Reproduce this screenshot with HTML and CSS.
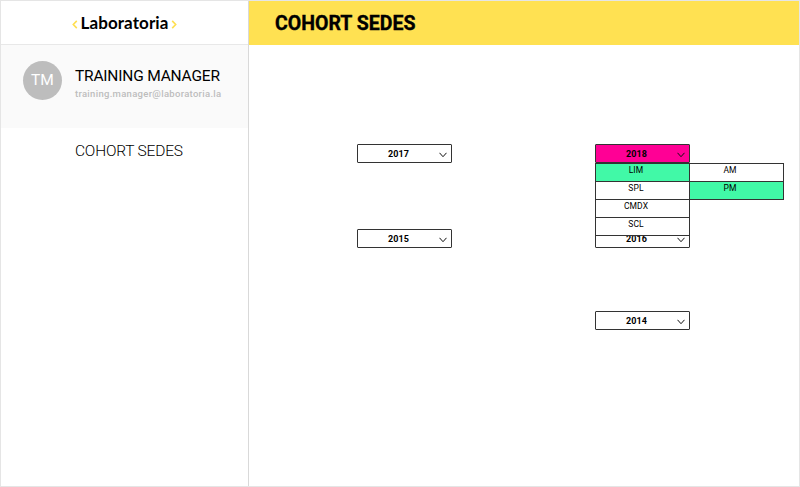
FILE: index.html
```
<!DOCTYPE html>
<html lang="es">
<head>
<meta charset="utf-8">
<title>Cohort Sedes</title>
<link rel="stylesheet" href="styles.css">
</head>
<body>
<div class="app">
  <aside class="sidebar">
    <div class="brand">
      <svg class="chevron" viewBox="0 0 6 9"><path d="M4.8 .9 1.3 4.5 4.8 8.1"/></svg>
      <span class="brand-name">Laboratoria</span>
      <svg class="chevron" viewBox="0 0 6 9"><path d="M1.2 .9 4.7 4.5 1.2 8.1"/></svg>
    </div>
    <div class="profile">
      <div class="avatar">TM</div>
      <div class="identity">
        <div class="name">TRAINING MANAGER</div>
        <div class="email">training.manager@laboratoria.la</div>
      </div>
    </div>
    <nav class="nav"><a class="nav-link">COHORT SEDES</a></nav>
  </aside>
  <main class="main">
    <header class="header"><h1 class="title">COHORT SEDES</h1></header>
    <section class="years">
      <div class="select"><span>2017</span><svg class="arrow" viewBox="0 0 8 6"><path d="M.5 .8 4 4.7 7.5 .8"/></svg></div>
      <div class="select open"><span>2018</span><svg class="arrow" viewBox="0 0 8 6"><path d="M.5 .8 4 4.7 7.5 .8"/></svg>
        <div class="menus">
          <ul class="menu">
            <li class="active">LIM</li><li>SPL</li><li>CMDX</li><li>SCL</li>
          </ul>
          <ul class="menu submenu">
            <li>AM</li><li class="active">PM</li>
          </ul>
        </div>
      </div>
      <div class="select"><span>2015</span><svg class="arrow" viewBox="0 0 8 6"><path d="M.5 .8 4 4.7 7.5 .8"/></svg></div>
      <div class="select"><span>2016</span><svg class="arrow" viewBox="0 0 8 6"><path d="M.5 .8 4 4.7 7.5 .8"/></svg></div>
      <div class="select last"><span>2014</span><svg class="arrow" viewBox="0 0 8 6"><path d="M.5 .8 4 4.7 7.5 .8"/></svg></div>
    </section>
  </main>
</div>
</body>
</html>
```
FILE: styles.css
```
* { box-sizing: border-box; }
body { margin: 0; font-family: Roboto, sans-serif; color: #000; background: #fff; }
.app { display: flex; width: 800px; height: 487px; border: 1px solid #e5e5e5; }
.sidebar { width: 248px; border-right: 1px solid #d9d9d9; }
.brand { height: 44px; display: flex; align-items: center; justify-content: center; gap: 2px; border-bottom: 1px solid #e8e8e8; }
.brand-name { width: 89px; font: 700 17px/20px Lato, sans-serif; letter-spacing: .1px; text-align: center; white-space: nowrap; }
.chevron { width: 6px; height: 9px; margin-top: 3px; fill: none; stroke: #ffdf50; stroke-width: 1.6; }
.profile { height: 83px; padding: 16px 0 0 22px; display: flex; gap: 13px; background: #fafafa; }
.avatar { width: 39px; height: 39px; border-radius: 50%; background: #bdbdbd; color: #fff; font-size: 15.5px; line-height: 39px; text-align: center; }
.name { margin-top: 6px; font-size: 15.5px; line-height: 18px; letter-spacing: -.19px; white-space: nowrap; }
.email { margin-top: 3px; font-size: 9.5px; font-weight: 500; line-height: 12px; letter-spacing: .3px; color: #bdbdbd; white-space: nowrap; }
.nav { padding: 13px 0 0 74px; }
.nav-link { font-size: 15.5px; font-weight: 300; line-height: 18px; letter-spacing: -.2px; }
.main { flex: 1; }
.header { height: 44px; padding: 2px 0 0 26px; display: flex; align-items: center; background: #ffe152; }
.title { margin: 0; font-size: 19.5px; line-height: 24px; font-weight: 700; -webkit-text-stroke: .35px #000; }
.years { display: grid; grid-template-columns: 95px 95px; grid-template-rows: 85px 82px 19px; column-gap: 143px; padding: 99px 0 0 108px; }
.select { position: relative; height: 19px; padding-right: 5px; display: flex; align-items: center; justify-content: space-between; border: 1px solid #333; border-radius: 1px; background: #fff; font-size: 9px; font-weight: 700; line-height: 17px; letter-spacing: .1px; }
.select span { width: 81px; padding-top: 1px; text-align: center; }
.arrow { position: absolute; right: 4px; top: 7px; width: 8px; height: 6px; fill: none; stroke: #111; stroke-width: 1; }
.last { grid-column: 2; }
.open { background: #ff0095; z-index: 1; }
.menus { position: absolute; top: 19px; left: -1px; display: flex; align-items: flex-start; }
.menu { width: 95px; margin: 0; padding: 0; list-style: none; }
.submenu { margin-left: -1px; }
.menu li { height: 19px; margin-top: -1px; padding-right: 13px; border: 1px solid #333; background: #fff; font-size: 8.5px; font-weight: 400; line-height: 13px; text-align: center; }
.menu .active { background: #41f9a7; }
```
